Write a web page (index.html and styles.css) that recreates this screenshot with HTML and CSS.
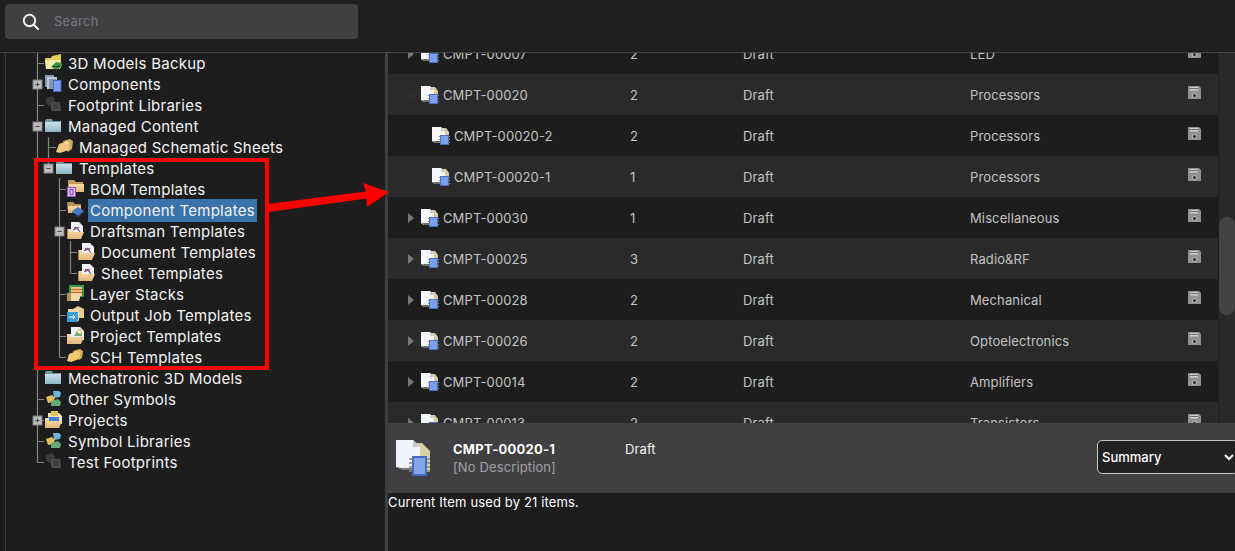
FILE: index.html
```html
<!DOCTYPE html>
<html lang="en">
<head>
<meta charset="utf-8">
<title>Component Templates</title>
<link rel="stylesheet" href="styles.css">
</head>
<body>
<svg class="defs" width="0" height="0" aria-hidden="true">
  <defs>
    <linearGradient id="g-blue" x1="0" y1="0" x2="0" y2="1"><stop offset="0" stop-color="#c9e0ea"/><stop offset="1" stop-color="#8fb5c6"/></linearGradient>
    <linearGradient id="g-tan" x1="0" y1="0" x2="0" y2="1"><stop offset="0" stop-color="#fbdca8"/><stop offset="1" stop-color="#e2b67a"/></linearGradient>
    <symbol id="i-cmpt" viewBox="0 0 18 18">
      <path d="M9 1h5l3 4v10H9z" fill="#d6cca0"/>
      <path d="M0 0h9l4 4v10H8v2H3l-3-2z" fill="#f6f8fc"/>
      <path d="M9 0v4h4z" fill="#c4c8d2"/>
      <path d="M1 14h7v2H3z" fill="#6f6f68"/>
      <path d="M7 9.500h11M7 12.500h11M7 15.500h11" stroke="#8a8a80"/>
      <rect x="8.500" y="8.500" width="8" height="9" fill="#7d9ee8" stroke="#4f6fc4"/>
    </symbol>
    <symbol id="i-cmpt-big" viewBox="0 0 36 36">
      <path d="M20 3h6l8 8v21H20z" fill="#dad0a2"/>
      <path d="M0 0h17l7 7v21H16v2H8l-8-3z" fill="#f1f4fb"/>
      <path d="M17 0v7h7z" fill="#c4c8d2"/>
      <path d="M0 27l8 3h8v-2H6z" fill="#77776f"/>
      <path d="M13 19h21M13 23h21M13 27h21M13 31h21" stroke="#85857c" stroke-width="1.500"/>
      <rect x="17" y="17" width="13" height="18" fill="#85a5ea" stroke="#466ac8" stroke-width="2"/>
    </symbol>
    <symbol id="i-disk" viewBox="0 0 13 13">
      <path d="M0 0h11l2 2v11H0z" fill="#919194"/>
      <rect x="2" y="1" width="8" height="3.500" fill="#cfcfd2"/>
      <rect x="2" y="2" width="8" height="1" fill="#6c6c6f"/>
      <circle cx="6.500" cy="9.500" r="2.600" fill="#b0b0b3"/>
      <circle cx="6.500" cy="9.500" r="1.500" fill="#2f2f31"/>
    </symbol>
    <symbol id="i-folder-blue" viewBox="0 0 17 17">
      <path d="M0 4l1-2h6l1 2h8v11H0z" fill="#6f98a8"/>
      <path d="M0 5h16v10H0z" fill="url(#g-blue)"/>
    </symbol>
    <symbol id="i-3d" viewBox="0 0 17 17">
      <path d="M0 4h6l1-2 9-2v14H1z" fill="#e0cd5a"/>
      <path d="M0 6h15v9H1z" fill="#f2eaa6"/>
      <path d="M6 13l5-5 6 1v3l-5 4z" fill="#3f9147"/>
      <path d="M8 12h7v1H8z" fill="#14381a"/>
    </symbol>
    <symbol id="i-comps" viewBox="0 0 17 17">
      <rect x="0" y="0" width="9" height="12" fill="#8599ad"/>
      <rect x="2" y="2" width="10" height="12" fill="#b8ccdd"/>
      <rect x="4" y="4" width="7" height="10" fill="#8497ad"/>
      <rect x="8.500" y="5.500" width="7.500" height="11" fill="#7d9ee8" stroke="#466ac8"/>
    </symbol>
    <symbol id="i-foot" viewBox="0 0 17 17">
      <path d="M1 2l6-2 3 3-1 6-5 1-3-3z" fill="#3b3b3b"/>
      <path d="M6 6h9l1 9H7l-1-2z" fill="#4d4d4d"/>
      <path d="M8 8h6M8 10h6M8 12h6" stroke="#353535"/>
    </symbol>
    <symbol id="i-sheets" viewBox="0 0 17 17">
      <path d="M7 3l7-2 3 2-1 8-4 3z" fill="#c9a866"/>
      <path d="M3 6l8-3 3 2-1 7-9 3-4-1z" fill="#efc67c"/>
      <path d="M8 4.500l3-1 2 1.500-3 1z" fill="#f6e1ad"/>
    </symbol>
    <symbol id="i-bom" viewBox="0 0 17 17">
      <path d="M1 0h6l2 2h7v10H1z" fill="#c49a5e"/>
      <path d="M2 4h15v8H2z" fill="url(#g-tan)"/>
      <rect x="0.500" y="7.500" width="8" height="9" fill="#dcbdf0" stroke="#9a55cf"/>
      <path d="M3 9.500h3v5H3z" fill="none" stroke="#7c3fb0"/>
    </symbol>
    <symbol id="i-comp-t" viewBox="0 0 17 17">
      <path d="M0 1h6l2 2h6v9H1z" fill="#b88f56"/>
      <path d="M1 5h13l-1 7H1z" fill="url(#g-tan)"/>
      <path d="M11 6l6 4-6 5-6-5z" fill="#4a78c8"/>
      <path d="M5 11l6 5 6-5" fill="none" stroke="#2f3f66"/>
    </symbol>
    <symbol id="i-draft" viewBox="0 0 17 17">
      <path d="M4 0h8l4 4v9H4z" fill="#f1f3fa"/>
      <path d="M7 5h6l-2 1 1 4-2-3-3 1z" fill="#d44646"/>
      <path d="M6 8l4-3 3 5" fill="none" stroke="#3e63b5"/>
      <path d="M0 7h4v3h13l-3 7H0z" fill="url(#g-tan)"/>
      <path d="M0 7h1v10H0z" fill="#a88450"/>
    </symbol>
    <symbol id="i-layers" viewBox="0 0 17 17">
      <rect x="2" y="0" width="15" height="12" fill="#2c9b56"/>
      <rect x="4" y="2" width="11" height="9" fill="#ecc17a"/>
      <path d="M4 4.500h11M4 7.500h11" stroke="#c06a30"/>
      <path d="M0 8h5l9 1-2 7H0z" fill="#f2d9a8"/>
      <path d="M0 8h4v8H0z" fill="#b88f56"/>
    </symbol>
    <symbol id="i-output" viewBox="0 0 17 17">
      <path d="M6 3l5-3 6 3v9H6z" fill="#e6cd96"/>
      <path d="M1 3h11v12H1z" fill="#f0d6a2"/>
      <rect x="0" y="6" width="11" height="10" fill="#3f9ad6"/>
      <path d="M2 11h6M6 9l2 2-2 2" fill="none" stroke="#fff"/>
    </symbol>
    <symbol id="i-proj" viewBox="0 0 17 17">
      <path d="M4 0h9l4 4v9H4z" fill="#eef1f8"/>
      <path d="M7 9l3-5 2 3 3-1v3z" fill="#6eb06a"/>
      <circle cx="12.500" cy="4.500" r="2" fill="none" stroke="#e0bb3c"/>
      <path d="M0 7h4v3h13l-3 7H0z" fill="url(#g-tan)"/>
    </symbol>
    <symbol id="i-sch" viewBox="0 0 17 17">
      <path d="M6 3l7-2 3 2-1 7-3 2z" fill="#d8ae5c"/>
      <path d="M2 6l8-3 3 2-1 6-8 3-4-1z" fill="#f3cb73"/>
    </symbol>
    <symbol id="i-sym" viewBox="0 0 17 17">
      <path d="M8 1h6l2 2-1 4-6 1z" fill="#6fb6d6"/>
      <path d="M1 7l6-2 3 3-2 4-5 1z" fill="#e5bd5c"/>
      <path d="M6 11l7-2 3 3-1 4H6z" fill="#67a87a"/>
    </symbol>
    <symbol id="i-projects" viewBox="0 0 17 17">
      <path d="M3 2h11l3 3v8H3z" fill="#efe2b0"/>
      <path d="M6 0h7v5H6z" fill="#e8c25e"/>
      <rect x="3" y="6" width="11" height="4" fill="#3f7fd0"/>
      <path d="M0 7h4v3h13l-3 7H0z" fill="url(#g-tan)"/>
    </symbol>
  </defs>
</svg>

<header class="topbar">
  <div class="search">
    <svg class="search-icon" viewBox="0 0 18 18" width="18" height="18">
      <circle cx="7.500" cy="7.500" r="5.700" fill="none" stroke="#f2f2f2" stroke-width="1.900"/>
      <path d="M11.800 11.800L16 16" stroke="#f2f2f2" stroke-width="2" stroke-linecap="round"/>
    </svg>
    <span class="search-text">Search</span>
  </div>
</header>

<main class="workspace">
  <aside class="tree-pane">
    <ul class="tree">
      <li class="node l0"><svg class="ic"><use href="#i-3d"/></svg><span class="label">3D Models Backup</span></li>
      <li class="node l0"><svg class="ic"><use href="#i-comps"/></svg><span class="label">Components</span></li>
      <li class="node l0"><svg class="ic"><use href="#i-foot"/></svg><span class="label">Footprint Libraries</span></li>
      <li class="node l0"><svg class="ic"><use href="#i-folder-blue"/></svg><span class="label">Managed Content</span></li>
      <li class="node l1"><svg class="ic"><use href="#i-sheets"/></svg><span class="label">Managed Schematic Sheets</span></li>
      <li class="node l1"><svg class="ic"><use href="#i-folder-blue"/></svg><span class="label">Templates</span></li>
      <li class="node l2"><svg class="ic"><use href="#i-bom"/></svg><span class="label">BOM Templates</span></li>
      <li class="node l2"><svg class="ic"><use href="#i-comp-t"/></svg><span class="label selected">Component Templates</span></li>
      <li class="node l2"><svg class="ic"><use href="#i-draft"/></svg><span class="label">Draftsman Templates</span></li>
      <li class="node l3"><svg class="ic"><use href="#i-draft"/></svg><span class="label">Document Templates</span></li>
      <li class="node l3"><svg class="ic"><use href="#i-draft"/></svg><span class="label">Sheet Templates</span></li>
      <li class="node l2"><svg class="ic"><use href="#i-layers"/></svg><span class="label">Layer Stacks</span></li>
      <li class="node l2"><svg class="ic"><use href="#i-output"/></svg><span class="label">Output Job Templates</span></li>
      <li class="node l2"><svg class="ic"><use href="#i-proj"/></svg><span class="label">Project Templates</span></li>
      <li class="node l2"><svg class="ic"><use href="#i-sch"/></svg><span class="label">SCH Templates</span></li>
      <li class="node l0"><svg class="ic"><use href="#i-folder-blue"/></svg><span class="label">Mechatronic 3D Models</span></li>
      <li class="node l0"><svg class="ic"><use href="#i-sym"/></svg><span class="label">Other Symbols</span></li>
      <li class="node l0"><svg class="ic"><use href="#i-projects"/></svg><span class="label">Projects</span></li>
      <li class="node l0"><svg class="ic"><use href="#i-sym"/></svg><span class="label">Symbol Libraries</span></li>
      <li class="node l0"><svg class="ic"><use href="#i-foot"/></svg><span class="label">Test Footprints</span></li>
    </ul>
    <svg class="connectors" width="90" height="440" viewBox="0 0 90 440">
      <g class="lines">
        <path d="M31.500 0V409.500M31.500 10.500H38M31.500 52.500H38M31.500 346.500H38M31.500 367.500H38M31.500 409.500H38M31.500 388.500H38"/>
        <path d="M42.500 84V116M42.500 94.500H50"/>
        <path d="M53.500 125V304.500M53.500 136.500H60M53.500 157.500H60M53.500 241.500H60M53.500 262.500H60M53.500 283.500H60M53.500 304.500H60"/>
        <path d="M64.500 188V220.500M64.500 199.500H71M64.500 220.500H71"/>
      </g>
      <g class="box"><rect x="27" y="27" width="9" height="9"/><path d="M29.500 31.500h4M31.500 29.500v4"/></g>
      <g class="box"><rect x="27" y="69" width="9" height="9"/><path d="M29.500 73.500h4"/></g>
      <g class="box"><rect x="38" y="111" width="9" height="9"/><path d="M40.500 115.500h4"/></g>
      <g class="box"><rect x="49" y="174" width="9" height="9"/><path d="M51.500 178.500h4"/></g>
      <g class="box"><rect x="27" y="363" width="9" height="9"/><path d="M29.500 367.500h4M31.500 365.500v4"/></g>
    </svg>
  </aside>

  <section class="detail-pane">
    <div class="table-wrap">
      <div class="table-view">
        <div class="table">
          <div class="row"><div class="c-name"><svg class="caret" viewBox="0 0 6 10"><path d="M0 0l6 5-6 5z"/></svg><svg class="ic-c"><use href="#i-cmpt"/></svg><span>CMPT-00007</span></div><div>2</div><div>Draft</div><div>LED</div><svg class="disk"><use href="#i-disk"/></svg></div>
          <div class="row alt"><div class="c-name"><svg class="caret down" viewBox="0 0 10 6"><path d="M0.500 0.500l4.500 5 4.500-5" fill="none"/></svg><svg class="ic-c"><use href="#i-cmpt"/></svg><span>CMPT-00020</span></div><div>2</div><div>Draft</div><div>Processors</div><svg class="disk"><use href="#i-disk"/></svg></div>
          <div class="row"><div class="c-name child"><svg class="ic-c"><use href="#i-cmpt"/></svg><span>CMPT-00020-2</span></div><div>2</div><div>Draft</div><div>Processors</div><svg class="disk"><use href="#i-disk"/></svg></div>
          <div class="row alt"><div class="c-name child"><svg class="ic-c"><use href="#i-cmpt"/></svg><span>CMPT-00020-1</span></div><div>1</div><div>Draft</div><div>Processors</div><svg class="disk"><use href="#i-disk"/></svg></div>
          <div class="row"><div class="c-name"><svg class="caret" viewBox="0 0 6 10"><path d="M0 0l6 5-6 5z"/></svg><svg class="ic-c"><use href="#i-cmpt"/></svg><span>CMPT-00030</span></div><div>1</div><div>Draft</div><div>Miscellaneous</div><svg class="disk"><use href="#i-disk"/></svg></div>
          <div class="row alt"><div class="c-name"><svg class="caret" viewBox="0 0 6 10"><path d="M0 0l6 5-6 5z"/></svg><svg class="ic-c"><use href="#i-cmpt"/></svg><span>CMPT-00025</span></div><div>3</div><div>Draft</div><div>Radio&amp;RF</div><svg class="disk"><use href="#i-disk"/></svg></div>
          <div class="row"><div class="c-name"><svg class="caret" viewBox="0 0 6 10"><path d="M0 0l6 5-6 5z"/></svg><svg class="ic-c"><use href="#i-cmpt"/></svg><span>CMPT-00028</span></div><div>2</div><div>Draft</div><div>Mechanical</div><svg class="disk"><use href="#i-disk"/></svg></div>
          <div class="row alt"><div class="c-name"><svg class="caret" viewBox="0 0 6 10"><path d="M0 0l6 5-6 5z"/></svg><svg class="ic-c"><use href="#i-cmpt"/></svg><span>CMPT-00026</span></div><div>2</div><div>Draft</div><div>Optoelectronics</div><svg class="disk"><use href="#i-disk"/></svg></div>
          <div class="row"><div class="c-name"><svg class="caret" viewBox="0 0 6 10"><path d="M0 0l6 5-6 5z"/></svg><svg class="ic-c"><use href="#i-cmpt"/></svg><span>CMPT-00014</span></div><div>2</div><div>Draft</div><div>Amplifiers</div><svg class="disk"><use href="#i-disk"/></svg></div>
          <div class="row alt"><div class="c-name"><svg class="caret" viewBox="0 0 6 10"><path d="M0 0l6 5-6 5z"/></svg><svg class="ic-c"><use href="#i-cmpt"/></svg><span>CMPT-00013</span></div><div>2</div><div>Draft</div><div>Transistors</div><svg class="disk"><use href="#i-disk"/></svg></div>
        </div>
      </div>
      <div class="scrollbar"><div class="thumb"></div></div>
    </div>
    <div class="summary">
      <svg class="ic-big"><use href="#i-cmpt-big"/></svg>
      <div class="summary-title">
        <div class="summary-id">CMPT-00020-1</div>
        <div class="summary-desc">[No Description]</div>
      </div>
      <div class="summary-state">Draft</div>
      <select class="summary-select"><option>Summary</option></select>
    </div>
    <p class="usage">Current Item used by 21 items.</p>
  </section>
</main>

<div class="callout-box"></div>
<svg class="callout-arrow" width="130" height="40" viewBox="0 0 130 40">
  <path d="M0 24L98 11.500 95 3 121 12 99 27 98.500 18.500 1 32z" fill="#fe0000"/>
</svg>
</body>
</html>
```
FILE: styles.css
```css
* { box-sizing: border-box; }
html, body { height: 100%; }
body {
  margin: 0;
  background: #1d1d1d;
  color: #fff;
  font-family: Inter, "Liberation Sans", sans-serif;
  overflow: hidden;
  display: flex;
  flex-direction: column;
  position: relative;
}
.defs { position: absolute; }

.topbar {
  height: 53px;
  flex: none;
  padding: 4px 0 0 5px;
  background: #1f1f1f;
  border-bottom: 1px solid #454545;
}
.search {
  width: 353px;
  height: 35px;
  background: #404042;
  border-radius: 4px;
  display: flex;
  align-items: center;
  padding-left: 17px;
  gap: 13px;
}
.search-text { font-size: 13px; line-height: 15px; color: #77777a; letter-spacing: 0.25px; margin: -1px 0 0 1px; }

.workspace { flex: 1; display: flex; padding-left: 5px; min-height: 0; }

.tree-pane {
  width: 380px;
  flex: none;
  position: relative;
  border-left: 1px solid #3c3c3c;
  overflow: hidden;
}
.tree { list-style: none; margin: 0; padding: 0; }
.node {
  height: 21px;
  display: flex;
  align-items: center;
  font-size: 15px;
  letter-spacing: 0.26px;
  line-height: 21px;
  color: #f4f4f4;
  white-space: nowrap;
}
.l0 { padding-left: 39px; }
.l1 { padding-left: 50px; }
.l2 { padding-left: 61px; }
.l3 { padding-left: 72px; }
.ic { width: 17px; height: 17px; flex: none; margin-right: 5px; margin-top: -2px; }
.label { padding: 0 1px; }
.selected { background: #3a72ac; height: 23px; line-height: 23px; width: 169px; margin-left: -1px; padding-left: 2px; }

.connectors { position: absolute; left: 0; top: 0; }
.lines path { fill: none; stroke: #858585; stroke-width: 1.200; }
.box rect { fill: #bdbdbd; stroke: #808080; }
.box path { fill: none; stroke: #444; stroke-width: 1; }

.detail-pane {
  flex: 1;
  min-width: 0;
  display: flex;
  flex-direction: column;
  border-left: 3px solid #3e3e40;
}
.table-wrap { height: 370px; flex: none; display: flex; overflow: hidden; }
.table-view { flex: 1; min-width: 0; overflow: hidden; }
.table { margin-top: -20px; }
.row {
  height: 41px;
  display: grid;
  grid-template-columns: 242px 113px 227px 218px 13px;
  align-items: center;
  font-size: 13px;
  letter-spacing: 0.12px;
  color: #c4c4c4;
  background: #1d1d1d;
}
.row.alt { background: #2a2a2a; }
.c-name { display: flex; align-items: center; padding-left: 20px; height: 100%; }
.c-name.child { padding-left: 44px; }
.caret { width: 6px; height: 10px; fill: #77777a; flex: none; margin-right: 7px; }
.caret.down { width: 10px; height: 6px; margin-left: -2px; margin-right: 5px; stroke: #3c3c3c; fill: none; }
.ic-c { width: 18px; height: 18px; flex: none; margin: 1px 4px 0 0; }
.disk { width: 13px; height: 13px; margin-top: -4px; }

.scrollbar { width: 17px; flex: none; background: #29292b; border-left: 1px solid #1f1f20; padding: 164px 0 0 0; }
.thumb { height: 98px; background: #434345; border-radius: 8px; }

.summary {
  height: 70px;
  flex: none;
  background: #404042;
  display: flex;
  align-items: flex-start;
  padding: 17px 0 0 8px;
  overflow: hidden;
}
.ic-big { width: 36px; height: 36px; flex: none; margin-right: 21px; }
.summary-title { width: 172px; flex: none; font-size: 13px; line-height: 18px; }
.summary-id { font-weight: 700; color: #fff; letter-spacing: 0.25px; }
.summary-desc { color: #a0a0a3; letter-spacing: 0.12px; }
.summary-state { font-size: 13px; line-height: 18px; width: 472px; flex: none; color: #f2f2f2; letter-spacing: 0.1px; }
.summary-select {
  width: 141px;
  height: 34px;
  flex: none;
  color-scheme: dark;
  background: #222224;
  color: #fff;
  border: 1px solid #c8c8c8;
  border-radius: 5px;
  font-family: Inter, sans-serif;
  font-size: 13px;
  font-weight: 500;
  padding-left: 0;
}
.usage { margin: 0; padding: 0; font-size: 13px; line-height: 18px; letter-spacing: 0.14px; color: #fff; }

.callout-box {
  position: absolute;
  left: 34px;
  top: 158px;
  width: 235px;
  height: 212px;
  border: 4px solid #fe0000;
}
.callout-arrow { position: absolute; left: 268px; top: 180px; }
```
